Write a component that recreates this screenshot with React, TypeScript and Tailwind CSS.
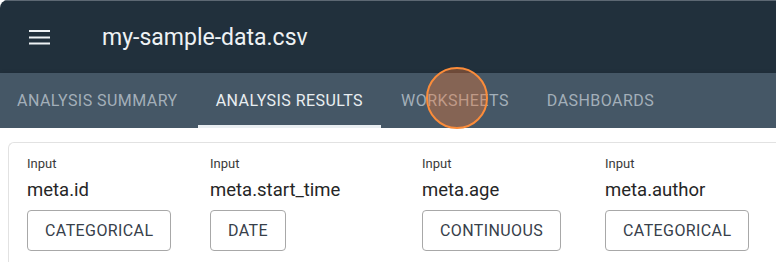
import React from "react";

const TABS = [
  { label: "ANALYSIS SUMMARY", active: false },
  { label: "ANALYSIS RESULTS", active: true },
  { label: "WORKSHEETS", active: false },
  { label: "DASHBOARDS", active: false },
];

const FIELDS = [
  { name: "meta.id", type: "CATEGORICAL", width: "w-[183px]" },
  { name: "meta.start_time", type: "DATE", width: "w-[212px]" },
  { name: "meta.age", type: "CONTINUOUS", width: "w-[183px]" },
  { name: "meta.author", type: "CATEGORICAL", width: "w-[183px]" },
];

export default function App() {
  return (
    <div className="w-[776px] h-[262px] overflow-hidden bg-white font-['Roboto',sans-serif] relative">
      <div className="rounded-tl-[8px] overflow-hidden">
        {/* App bar */}
        <header className="h-[73px] bg-[#21303c] border-t border-[#5d6873] flex items-center">
          <svg className="ml-[29px]" width="21" height="15" viewBox="0 0 21 15">
            <rect x="0" y="0" width="21" height="2" fill="#eef2f4" />
            <rect x="0" y="6.5" width="21" height="2" fill="#eef2f4" />
            <rect x="0" y="12.5" width="21" height="2" fill="#eef2f4" />
          </svg>
          <h1 className="ml-[52px] text-[23px] text-[#eef2f4] leading-none">my-sample-data.csv</h1>
        </header>

        {/* Tabs */}
        <nav className="h-[55px] bg-[#455766] flex gap-[2px] shadow-[0_2px_5px_rgba(0,0,0,0.28)] relative z-10">
          {TABS.map((t, i) => (
            <div
              key={t.label}
              className={`h-full flex items-center relative text-[16px] tracking-[0.45px] ${
                i === 0 ? "pl-[17px] pr-[18px]" : "px-[18px]"
              } ${t.active ? "text-[#e9eef1]" : "text-[#a3afb9]"}`}
            >
              {t.label}
              {t.active && <span className="absolute left-0 right-0 bottom-0 h-[3px] bg-[#e9eef1]" />}
            </div>
          ))}
        </nav>
      </div>

      {/* Content */}
      <div className="pt-[14px] pl-[8px]">
        <div className="border border-[#e2e2e2] border-r-0 rounded-tl-[6px] pl-[18px] pt-[12px] pb-[20px] flex">
          {FIELDS.map((f) => (
            <div key={f.name} className={`${f.width} shrink-0 flex flex-col items-start`}>
              <div className="text-[13px] leading-[17px] text-[#3a3a3a]">Input</div>
              <div className="mt-[6px] text-[18.5px] leading-[24px] text-[#262626]">{f.name}</div>
              <button className="mt-[8px] h-[41px] px-[17px] border border-[#a8a8a8] rounded-[4px] text-[16px] tracking-[0.4px] text-[#37404a]">
                {f.type}
              </button>
            </div>
          ))}
        </div>
      </div>

      {/* click indicator */}
      <div className="absolute left-[426px] top-[67px] w-[62px] h-[62px] rounded-full border-2 border-[#fb8c3a] bg-[rgba(238,122,55,0.38)] z-20" />
    </div>
  );
}
